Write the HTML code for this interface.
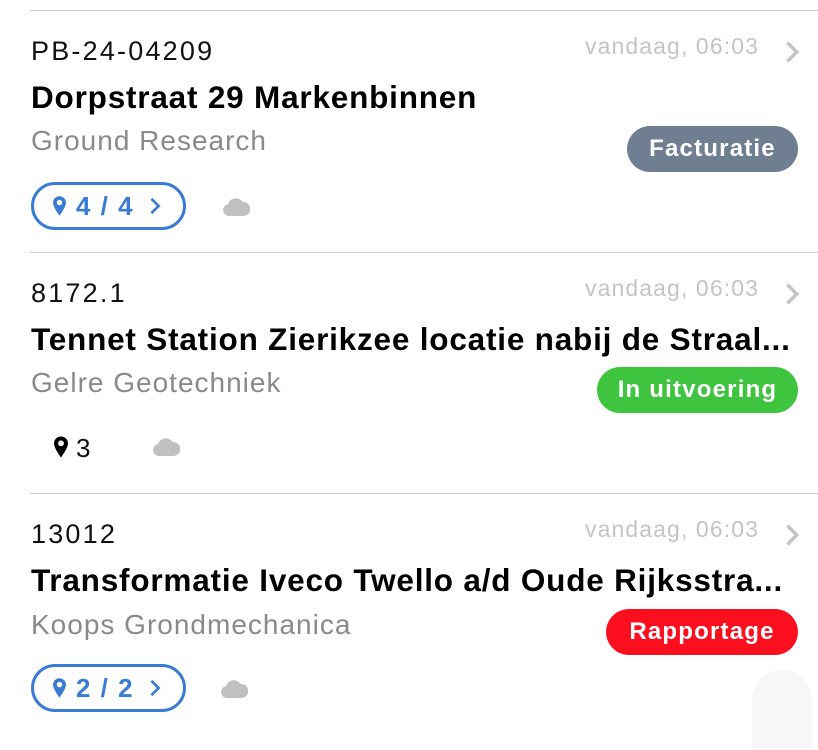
<!DOCTYPE html><html><head><meta charset="utf-8"><style>
body{margin:0;width:818px;height:730px;background:#fff;position:relative;overflow:hidden;font-family:"Liberation Sans",sans-serif}
.a{position:absolute;white-space:nowrap}
.sep{position:absolute;left:30px;right:0;height:1px;background:#cfcfcf}
.id{left:31px;font-size:27px;color:#111;letter-spacing:2.2px}
.t{left:31px;font-size:31.5px;font-weight:bold;color:#000;letter-spacing:0.8px}
.s{left:31px;font-size:28px;color:#8a8a8a;letter-spacing:1px}
.d{left:585px;font-size:23px;color:#c4c4c4;letter-spacing:1.1px}
.b{height:46px;border-radius:23px;color:#fff;font-weight:bold;font-size:24px;line-height:46px;text-align:center;letter-spacing:1.2px}
.p{left:31px;width:149px;height:42px;border:3px solid #3a7bd5;border-radius:24px;color:#3a7bd5;font-weight:bold;font-size:26px;line-height:42px;letter-spacing:1.5px}
</style></head><body>
<svg width="0" height="0" style="position:absolute"><defs>
<symbol id="pin" viewBox="0 0 12 18"><path d="M6 0C2.7 0 0 2.6 0 5.9 0 10 6 18 6 18s6-8 6-12.1C12 2.6 9.3 0 6 0zm0 8.3a2.5 2.5 0 1 1 0-5 2.5 2.5 0 0 1 0 5z" fill="currentColor"/></symbol>
<symbol id="cl" viewBox="0 0 28 20"><path d="M7 20a6 6 0 0 1-1-11.9A8 8 0 0 1 20.5 6 6 6 0 0 1 22 20z" fill="#c0c0c0"/></symbol>
<symbol id="ch" viewBox="0 0 12 20"><path d="M2 2l8 8-8 8" fill="none" stroke="currentColor" stroke-width="3"/></symbol>
</defs></svg>

<div class="sep" style="top:10px"></div>
<div class="a id" style="top:36px">PB-24-04209</div>
<div class="a d" style="top:33px">vandaag, 06:03</div>
<svg class="a" style="left:785px;top:40px;color:#c4c4c4" width="14" height="24"><use href="#ch"/></svg>
<div class="a t" style="top:79px">Dorpstraat 29 Markenbinnen</div>
<div class="a s" style="top:125px">Ground Research</div>
<div class="a b" style="left:627px;top:126px;width:171px;background:#6f7f91">Facturatie</div>
<div class="a p" style="top:182px"><svg class="a" style="left:19px;top:11px;color:#3a7bd5" width="13" height="20"><use href="#pin"/></svg><span class="a" style="left:42px;top:0">4 / 4</span><svg class="a" style="left:115px;top:12px;color:#3a7bd5" width="12" height="18"><use href="#ch"/></svg></div>
<svg class="a" style="left:222px;top:196px" width="28" height="20"><use href="#cl"/></svg>

<div class="sep" style="top:252px"></div>
<div class="a id" style="top:278px">8172.1</div>
<div class="a d" style="top:275px">vandaag, 06:03</div>
<svg class="a" style="left:785px;top:282px;color:#c4c4c4" width="14" height="24"><use href="#ch"/></svg>
<div class="a t" style="top:321px">Tennet Station Zierikzee locatie nabij de Straal...</div>
<div class="a s" style="top:367px">Gelre Geotechniek</div>
<div class="a b" style="left:597px;top:367px;width:201px;background:#3ec43e">In uitvoering</div>
<svg class="a" style="left:54px;top:436px;color:#000" width="14" height="22"><use href="#pin"/></svg>
<div class="a" style="left:76px;top:433px;font-size:26px;color:#111">3</div>
<svg class="a" style="left:152px;top:436px" width="28" height="20"><use href="#cl"/></svg>

<div class="sep" style="top:493px"></div>
<div class="a id" style="top:519px">13012</div>
<div class="a d" style="top:516px">vandaag, 06:03</div>
<svg class="a" style="left:785px;top:523px;color:#c4c4c4" width="14" height="24"><use href="#ch"/></svg>
<div class="a t" style="top:562px">Transformatie Iveco Twello a/d Oude Rijksstra...</div>
<div class="a s" style="top:609px">Koops Grondmechanica</div>
<div class="a b" style="left:606px;top:609px;width:192px;background:#fc1020">Rapportage</div>
<div class="a p" style="top:664px"><svg class="a" style="left:19px;top:11px;color:#3a7bd5" width="13" height="20"><use href="#pin"/></svg><span class="a" style="left:42px;top:0">2 / 2</span><svg class="a" style="left:115px;top:12px;color:#3a7bd5" width="12" height="18"><use href="#ch"/></svg></div>
<svg class="a" style="left:220px;top:678px" width="28" height="20"><use href="#cl"/></svg>
<div class="a" style="left:752px;top:670px;width:60px;height:80px;border-radius:30px 30px 0 0;background:#f7f7f7"></div>
</body></html>
